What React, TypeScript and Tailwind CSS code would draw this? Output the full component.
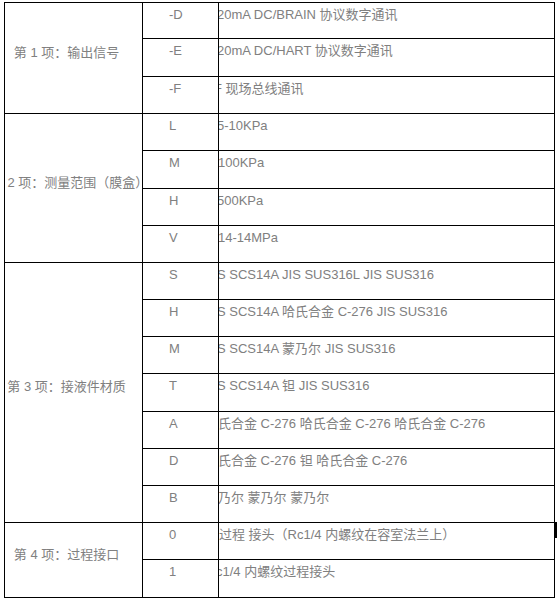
import React from "react";

type Row = { code: string; text: string; shift: string; h: string };
type Group = { label: string; pad: string; rows: Row[] };

const groups: Group[] = [
  {
    label: "第 1 项：输出信号",
    pad: "pr-[14px]",
    rows: [
      { code: "-D", text: "20mA DC/BRAIN 协议数字通讯", shift: "ml-[-2px]", h: "h-[36px]" },
      { code: "-E", text: "20mA DC/HART 协议数字通讯", shift: "ml-[-2px]", h: "h-[38px]" },
      { code: "-F", text: "F 现场总线通讯", shift: "ml-[-5px]", h: "h-[37px]" },
    ],
  },
  {
    label: "第 2 项：测量范围（膜盒）",
    pad: "pr-[8px]",
    rows: [
      { code: "L", text: "5-10KPa", shift: "ml-[-2px]", h: "h-[37px]" },
      { code: "M", text: "100KPa", shift: "ml-[-1px]", h: "h-[38px]" },
      { code: "H", text: "500KPa", shift: "ml-[-2px]", h: "h-[37px]" },
      { code: "V", text: "14-14MPa", shift: "ml-[-1px]", h: "h-[37px]" },
    ],
  },
  {
    label: "第 3 项：接液件材质",
    pad: "pr-[14px]",
    rows: [
      { code: "S", text: "S SCS14A JIS SUS316L JIS SUS316", shift: "ml-[-2px]", h: "h-[37px]" },
      { code: "H", text: "S SCS14A 哈氏合金 C-276 JIS SUS316", shift: "ml-[-2px]", h: "h-[37px]" },
      { code: "M", text: "S SCS14A 蒙乃尔 JIS SUS316", shift: "ml-[-2px]", h: "h-[37px]" },
      { code: "T", text: "S SCS14A 钽 JIS SUS316", shift: "ml-[-2px]", h: "h-[38px]" },
      { code: "A", text: "氏合金 C-276 哈氏合金 C-276 哈氏合金 C-276", shift: "ml-[-1px]", h: "h-[37px]" },
      { code: "D", text: "氏合金 C-276 钽 哈氏合金 C-276", shift: "ml-[-1px]", h: "h-[37px]" },
      { code: "B", text: "乃尔 蒙乃尔 蒙乃尔", shift: "ml-[-1px]", h: "h-[37px]" },
    ],
  },
  {
    label: "第 4 项：过程接口",
    pad: "pr-[14px]",
    rows: [
      { code: "0", text: "过程 接头（Rc1/4 内螺纹在容室法兰上）", shift: "ml-[0px]", h: "h-[37px]" },
      { code: "1", text: "c1/4 内螺纹过程接头", shift: "ml-[-3px]", h: "h-[38px]" },
    ],
  },
];

export default function App() {
  return (
    <div
      className="relative w-[557px] h-[602px] bg-white pl-[4px] pt-[2px] text-[13px] leading-[18px] text-[#808080]"
      style={{ fontFamily: '"Liberation Sans", "Noto Sans CJK SC", sans-serif' }}
    >
      <div className="w-[551px] border-l border-t border-black">
        {groups.map((g, gi) => (
          <div key={gi} className="flex">
            <div
              className={`w-[138px] shrink-0 border-r border-b border-black flex items-center justify-center pb-[11px] overflow-hidden whitespace-nowrap ${g.pad}`}
            >
              <span className="shrink-0">{g.label}</span>
            </div>
            <div className="flex flex-col">
              {g.rows.map((r, ri) => (
                <div key={ri} className={`flex border-b border-black ${r.h}`}>
                  <div className="w-[76px] shrink-0 border-r border-black pl-[26px] pt-[3px]">
                    {r.code}
                  </div>
                  <div className="w-[336px] shrink-0 border-r border-black overflow-hidden whitespace-nowrap pt-[3px]">
                    <span className={`inline-block ${r.shift}`}>{r.text}</span>
                  </div>
                </div>
              ))}
            </div>
          </div>
        ))}
      </div>
      <div className="absolute left-[555px] top-[522px] w-[2px] h-[16px] bg-black" />
    </div>
  );
}
